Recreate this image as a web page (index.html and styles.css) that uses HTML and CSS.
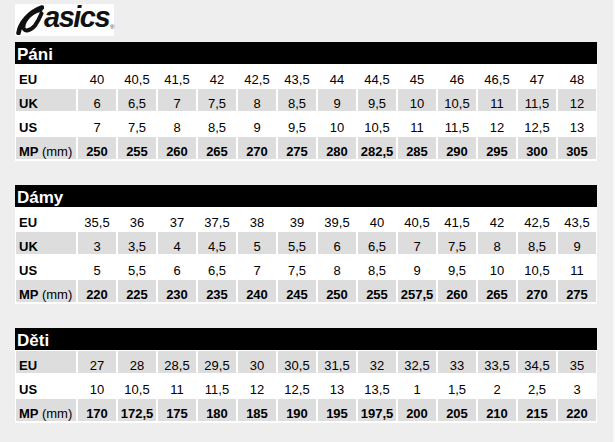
FILE: index.html
```html
<!DOCTYPE html>
<html lang="cs">
<head>
<meta charset="utf-8">
<title>ASICS – tabulka velikostí</title>
<link rel="stylesheet" href="styles.css">
</head>
<body>
<div class="page">
  <div class="logo">
    <svg class="logo-mark" width="28" height="30" viewBox="0 0 28 30" aria-hidden="true">
      <path d="M2.5,28 C4,18.5 13,7 26,2.5" fill="none" stroke="#111" stroke-width="4.6" stroke-linecap="round"/>
      <path d="M24.5,5 C15.5,6.5 7,15 7.5,22.5 C8,27.5 15,25.5 19,20.5 C22,16.5 24,12 25.5,8.5" fill="none" stroke="#111" stroke-width="4" stroke-linecap="round"/>
    </svg>
    <span class="logo-text">asics</span><span class="logo-reg">®</span>
  </div>

  <section class="size-table">
    <h2 class="size-title">Páni</h2>
    <div class="size-rows">
      <div class="size-row"><div class="lbl">EU</div><div>40</div><div>40,5</div><div>41,5</div><div>42</div><div>42,5</div><div>43,5</div><div>44</div><div>44,5</div><div>45</div><div>46</div><div>46,5</div><div>47</div><div>48</div></div>
      <div class="size-row gray"><div class="lbl">UK</div><div>6</div><div>6,5</div><div>7</div><div>7,5</div><div>8</div><div>8,5</div><div>9</div><div>9,5</div><div>10</div><div>10,5</div><div>11</div><div>11,5</div><div>12</div></div>
      <div class="size-row"><div class="lbl">US</div><div>7</div><div>7,5</div><div>8</div><div>8,5</div><div>9</div><div>9,5</div><div>10</div><div>10,5</div><div>11</div><div>11,5</div><div>12</div><div>12,5</div><div>13</div></div>
      <div class="size-row gray mp"><div class="lbl">MP <span class="unit">(mm)</span></div><div>250</div><div>255</div><div>260</div><div>265</div><div>270</div><div>275</div><div>280</div><div>282,5</div><div>285</div><div>290</div><div>295</div><div>300</div><div>305</div></div>
    </div>
  </section>

  <section class="size-table">
    <h2 class="size-title">Dámy</h2>
    <div class="size-rows">
      <div class="size-row"><div class="lbl">EU</div><div>35,5</div><div>36</div><div>37</div><div>37,5</div><div>38</div><div>39</div><div>39,5</div><div>40</div><div>40,5</div><div>41,5</div><div>42</div><div>42,5</div><div>43,5</div></div>
      <div class="size-row gray"><div class="lbl">UK</div><div>3</div><div>3,5</div><div>4</div><div>4,5</div><div>5</div><div>5,5</div><div>6</div><div>6,5</div><div>7</div><div>7,5</div><div>8</div><div>8,5</div><div>9</div></div>
      <div class="size-row"><div class="lbl">US</div><div>5</div><div>5,5</div><div>6</div><div>6,5</div><div>7</div><div>7,5</div><div>8</div><div>8,5</div><div>9</div><div>9,5</div><div>10</div><div>10,5</div><div>11</div></div>
      <div class="size-row gray mp"><div class="lbl">MP <span class="unit">(mm)</span></div><div>220</div><div>225</div><div>230</div><div>235</div><div>240</div><div>245</div><div>250</div><div>255</div><div>257,5</div><div>260</div><div>265</div><div>270</div><div>275</div></div>
    </div>
  </section>

  <section class="size-table">
    <h2 class="size-title">Děti</h2>
    <div class="size-rows">
      <div class="size-row gray"><div class="lbl">EU</div><div>27</div><div>28</div><div>28,5</div><div>29,5</div><div>30</div><div>30,5</div><div>31,5</div><div>32</div><div>32,5</div><div>33</div><div>33,5</div><div>34,5</div><div>35</div></div>
      <div class="size-row"><div class="lbl">US</div><div>10</div><div>10,5</div><div>11</div><div>11,5</div><div>12</div><div>12,5</div><div>13</div><div>13,5</div><div>1</div><div>1,5</div><div>2</div><div>2,5</div><div>3</div></div>
      <div class="size-row gray mp"><div class="lbl">MP <span class="unit">(mm)</span></div><div>170</div><div>172,5</div><div>175</div><div>180</div><div>185</div><div>190</div><div>195</div><div>197,5</div><div>200</div><div>205</div><div>210</div><div>215</div><div>220</div></div>
    </div>
  </section>
</div>
</body>
</html>
```

FILE: styles.css
```css
html, body {
  margin: 0;
  padding: 0;
  background: #f8f8f8;
}

.page {
  width: 613px;
  min-height: 442px;
  box-sizing: border-box;
  background: #eeeeee;
  padding: 4px 0 0 15px;
  font-family: "Liberation Sans", Arial, sans-serif;
  color: #000;
}

.logo {
  width: 99px;
  height: 32px;
  background: #fff;
  display: flex;
  align-items: flex-start;
}

.logo-mark {
  margin-left: 1px;
  margin-top: 1px;
  flex: none;
}

.logo-text {
  margin-left: 0;
  font-size: 29px;
  line-height: 27px;
  font-weight: bold;
  font-style: italic;
  letter-spacing: -1.5px;
  color: #111;
}

.logo-reg {
  font-size: 6px;
  line-height: 6px;
  margin-top: 20px;
  margin-left: 1px;
  color: #333;
}

.size-table {
  width: 582px;
  background: #fff;
  margin-top: 24px;
}

.logo + .size-table {
  margin-top: 6px;
}

.size-title {
  margin: 0;
  height: 22px;
  box-sizing: border-box;
  padding: 2px 0 0 2px;
  line-height: 22px;
  background: #000;
  color: #fff;
  font-size: 17px;
  font-weight: bold;
}

.size-rows {
  display: flex;
  flex-direction: column;
  gap: 2px;
  padding: 1px 1px 2px;
}

.size-row {
  display: grid;
  grid-template-columns: 60px repeat(13, 38px);
  column-gap: 2px;
  height: 22px;
  font-size: 13px;
}

.size-row > div {
  height: 22px;
  box-sizing: border-box;
  padding-top: 7px;
  line-height: 15px;
  text-align: center;
  white-space: nowrap;
}

.size-row > .lbl {
  text-align: left;
  padding-left: 3px;
  font-weight: bold;
}

.size-row.gray > div {
  background: #dddddd;
}

.size-row.mp > div {
  font-weight: bold;
}

.size-row .unit {
  font-weight: normal;
}
```
